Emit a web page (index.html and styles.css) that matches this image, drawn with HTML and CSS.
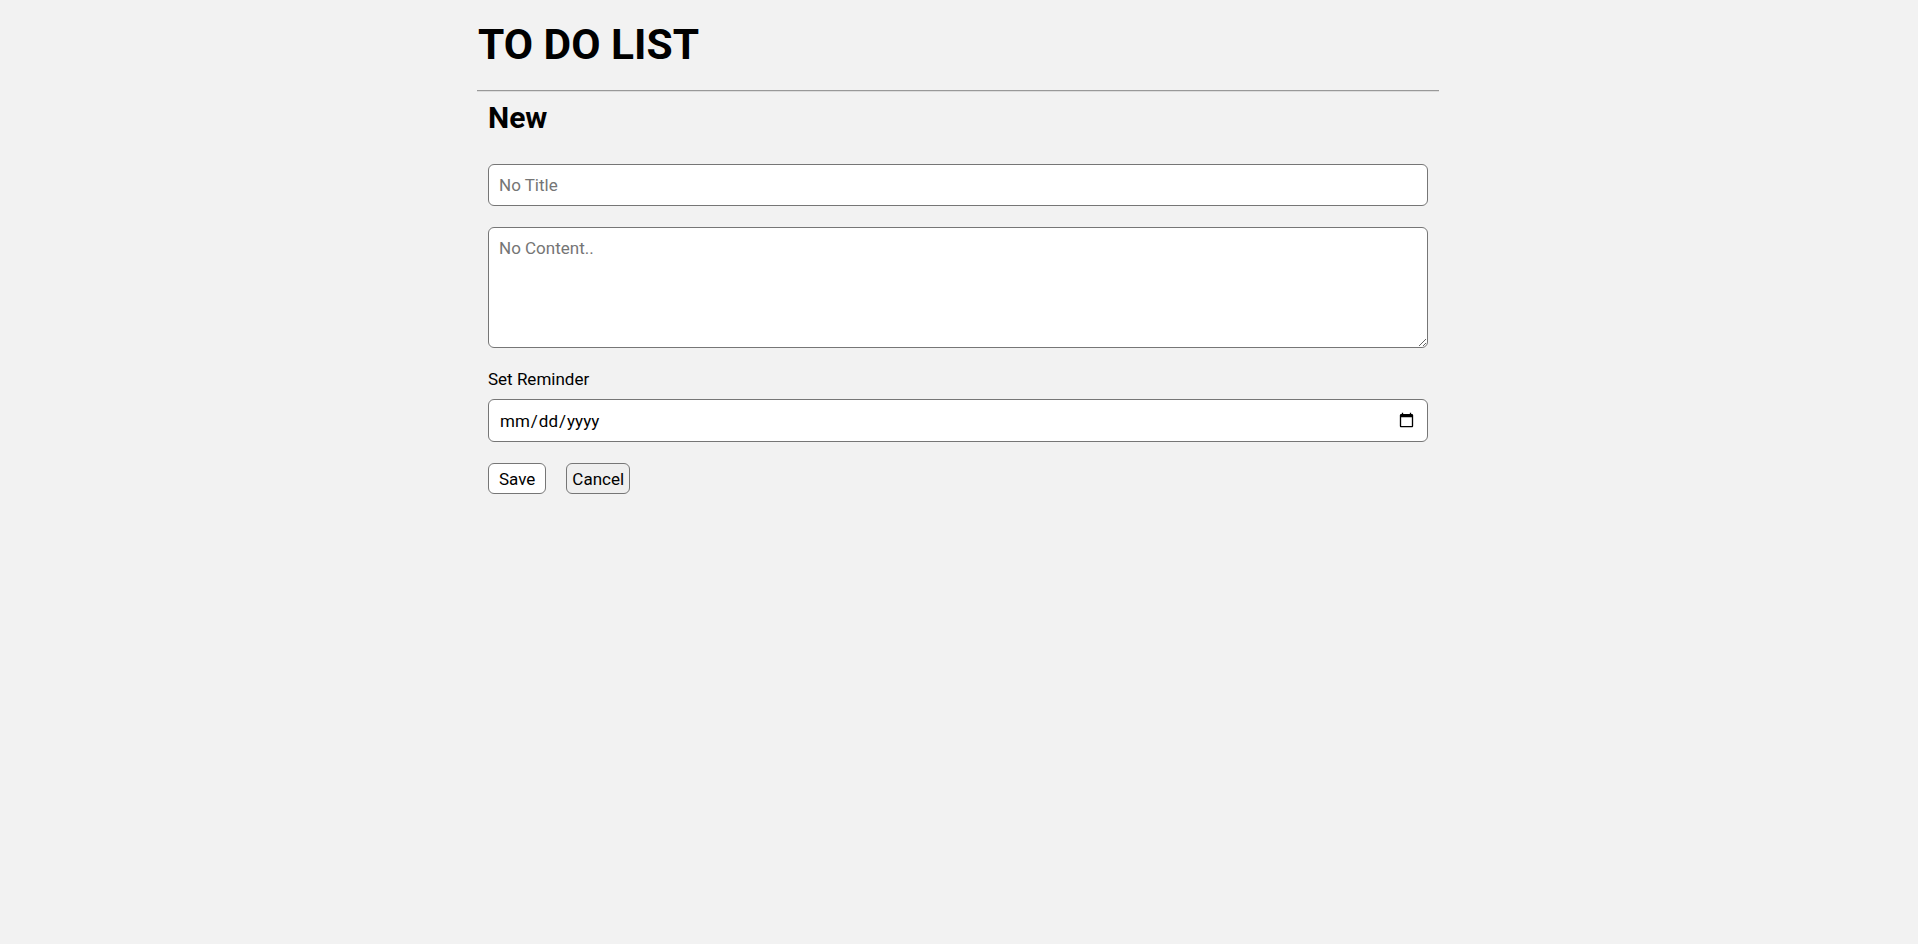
FILE: index.html
```html
<!DOCTYPE html>
<html lang="en">
<head>
<meta charset="utf-8">
<title>To Do List</title>
<link rel="stylesheet" href="styles.css">
</head>
<body>
<div class="app">
  <h1 class="app-title">TO DO LIST</h1>
  <hr class="divider">
  <form class="note-form">
    <h2 class="form-title">New</h2>
    <input class="field field-text" type="text" placeholder="No Title">
    <textarea class="field field-area" placeholder="No Content.."></textarea>
    <label class="field-label">Set Reminder</label>
    <input class="field field-date" type="date">
    <div class="actions">
      <button type="button" class="btn btn-save">Save</button>
      <button type="button" class="btn btn-cancel">Cancel</button>
    </div>
  </form>
</div>
</body>
</html>
```

FILE: styles.css
```css
html, body {
  margin: 0;
  padding: 0;
  background: #f2f2f2;
  font-family: Roboto, "Liberation Sans", sans-serif;
  color: #000;
}

.app {
  width: 962px;
  margin-left: calc(50% - 482px);
  padding-top: 18px;
}

.app-title {
  margin: 0;
  font-size: 42.5px;
  font-weight: 700;
  line-height: 53px;
  padding-left: 1px;
}

.divider {
  margin: 19px 0 0;
  border: none;
  border-top: 1px solid #999;
  border-bottom: 1px solid #ddd;
  height: 0;
}

.note-form {
  display: flex;
  flex-direction: column;
  align-items: flex-start;
  padding: 0 11px;
}

.form-title {
  margin: 8px 0 29px;
  font-size: 30px;
  font-weight: 700;
  line-height: 35px;
}

.field {
  box-sizing: border-box;
  width: 940px;
  font-family: Roboto, "Liberation Sans", sans-serif;
  font-size: 17px;
  line-height: 20px;
  padding: 10px 10px;
  border: 1px solid #767676;
  border-radius: 6px;
  background: #fff;
  color: #000;
  margin: 0;
}

.field::placeholder {
  color: #757575;
}

.field-text {
  height: 42px;
}

.field-area {
  height: 121px;
  margin-top: 21px;
  resize: vertical;
  display: block;
}

.field-label {
  margin-top: 21px;
  font-size: 17px;
  line-height: 20px;
}

.field-date {
  margin-top: 10px;
  height: 43px;
}

.actions {
  display: flex;
  gap: 20px;
  margin-top: 21px;
}

.btn {
  box-sizing: border-box;
  font-family: Roboto, "Liberation Sans", sans-serif;
  font-size: 17px;
  line-height: 20px;
  height: 31px;
  border: 1px solid #767676;
  border-radius: 6px;
  color: #000;
  margin: 0;
}

.btn-save {
  padding: 4px 10px;
  background: #fff;
}

.btn-cancel {
  padding: 4px 5px;
  background: #efefef;
}
```
